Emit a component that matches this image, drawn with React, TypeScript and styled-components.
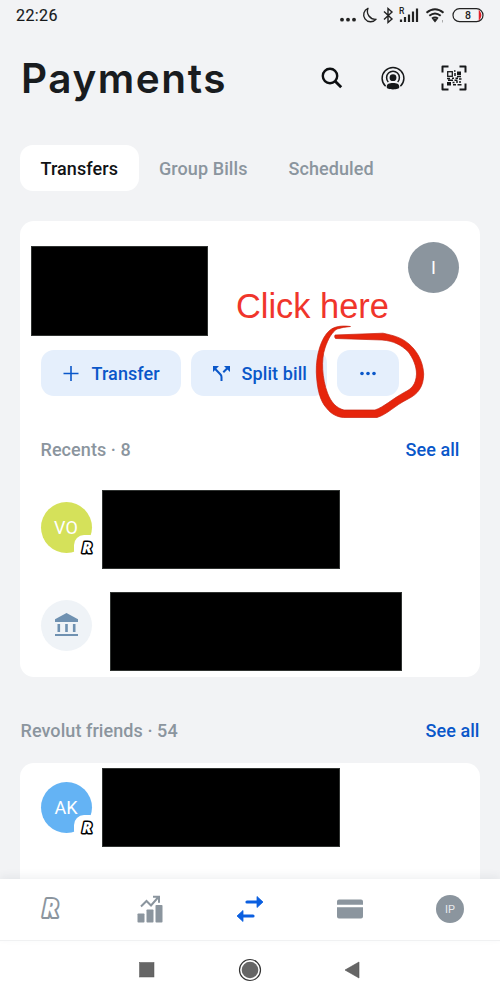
import React from "react";
import styled, { createGlobalStyle } from "styled-components";

const GlobalStyle = createGlobalStyle`
  * { box-sizing: border-box; }
  body { margin: 0; background: #f2f3f5; }
  svg { display: block; flex: none; }
`;

const Screen = styled.div`
  position: relative;
  display: flex;
  flex-direction: column;
  width: 500px;
  height: 1000px;
  overflow: hidden;
  background: #f2f3f5;
  font-family: Roboto, sans-serif;
  font-size: 18px;
  letter-spacing: 0.07px;
  color: #191c1f;
`;

const StatusBar = styled.div`
  display: flex;
  justify-content: space-between;
  align-items: center;
  height: 32px;
  padding: 0 14px 0 16px;
`;

const Clock = styled.span`
  font-size: 16px;
  line-height: 32px;
  letter-spacing: 0.4px;
  color: #16181a;
  -webkit-text-stroke: 0.15px #16181a;
`;

const Header = styled.header`
  display: flex;
  align-items: center;
  justify-content: space-between;
  height: 92px;
  padding: 0 32px 0 21px;
`;

const Title = styled.h1`
  margin: 1px 0 0;
  font-family: Inter, sans-serif;
  font-size: 40.5px;
  font-weight: 600;
  line-height: 48px;
  letter-spacing: 1.55px;
`;

const HeaderActions = styled.div`
  display: flex;
  align-items: center;
  gap: 33px;
`;

const Tabs = styled.nav`
  display: flex;
  height: 46px;
  margin: 21px 20px 0;
`;

const Tab = styled.button<{ $active?: boolean }>`
  height: 46px;
  padding: 1px 20.5px 0;
  margin-right: 0;
  border: 0;
  border-radius: 13px;
  background: ${({ $active }) => ($active ? "#fff" : "transparent")};
  color: ${({ $active }) => ($active ? "#111315" : "#8b959e")};
  font: 500 18px Roboto, sans-serif;
  letter-spacing: 0.08px;
`;

const Card = styled.section<{ $height?: number }>`
  flex: none;
  display: flex;
  flex-direction: column;
  width: 460px;
  height: ${({ $height }) => ($height ? `${$height}px` : "auto")};
  margin: 0 20px;
  border-radius: 14px;
  background: #fff;
`;

const AccountHeader = styled.div`
  display: flex;
  justify-content: space-between;
  align-items: flex-start;
  height: 129px;
  padding: 25px 21px 0 10.5px;
`;

const Redaction = styled.div<{ $width: number; $height: number }>`
  flex: none;
  width: ${({ $width }) => $width}px;
  height: ${({ $height }) => $height}px;
  background: #000;
  border: 1px solid #303331;
`;

const Avatar = styled.div<{ $color: string; $raise?: number }>`
  position: relative;
  flex: none;
  display: flex;
  align-items: center;
  justify-content: center;
  width: 51px;
  height: 51px;
  margin-top: ${({ $raise = 0 }) => -$raise}px;
  border-radius: 50%;
  background: ${({ $color }) => $color};
  color: #fff;
  font-size: 18px;
`;

const Badge = styled.span`
  position: absolute;
  left: 33px;
  top: 33px;
  width: 26px;
  height: 26px;
  border-radius: 10px;
  background: #fff;
`;

const Actions = styled.div`
  display: flex;
  gap: 10px;
  height: 46px;
  padding-left: 20.5px;
`;

const ActionButton = styled.button<{ $width: number }>`
  display: flex;
  align-items: center;
  justify-content: ${({ $width }) => ($width < 80 ? "center" : "flex-start")};
  gap: 10px;
  width: ${({ $width }) => $width}px;
  height: 46px;
  padding: 1px 0 0 ${({ $width }) => ($width < 80 ? 0 : 20)}px;
  border: 0;
  border-radius: 13px;
  background: #e5effc;
  color: #0a57c9;
  font: 500 18px/46px Roboto, sans-serif;
  letter-spacing: 0.1px;
  white-space: nowrap;
`;

const SectionHeading = styled.div<{ $inset: number }>`
  flex: none;
  display: flex;
  justify-content: space-between;
  height: 30px;
  padding: 0 ${({ $inset }) => $inset}px;
  line-height: 30px;
  font-weight: 500;
  color: #8b959e;
`;

const SeeAll = styled.a`
  color: #0a57c9;
`;

const ContactRow = styled.div<{ $gap: number; $height: number }>`
  display: flex;
  align-items: center;
  gap: ${({ $gap }) => $gap}px;
  height: ${({ $height }) => $height}px;
  padding-left: 20.5px;
`;

const Recents = styled.div`
  margin-top: 39px;
`;

const ContactList = styled.div`
  display: flex;
  flex-direction: column;
  gap: 23px;
  padding-top: 25px;
`;

const Content = styled.main`
  flex: none;
  display: flex;
  flex-direction: column;
  height: 658px;
  margin-top: 30px;
  overflow: hidden;
`;

const FriendsHeading = styled.div`
  flex: none;
  margin: 39px 0 17px;
`;

const FriendsBody = styled.div`
  padding-top: 5px;
`;

const BottomBar = styled.nav`
  position: relative;
  display: grid;
  grid-template-columns: repeat(5, 100px);
  place-items: center;
  height: 62px;
  padding-bottom: 1px;
  background: #fff;
  border-bottom: 1px solid #f0f1f2;
  box-shadow: 0 -3px 8px rgba(60, 70, 80, 0.07);
`;

const ProfileDot = styled.span`
  display: flex;
  align-items: center;
  justify-content: center;
  width: 28px;
  height: 28px;
  border-radius: 50%;
  background: #8b959e;
  color: #e6e9ec;
  font-size: 11px;
`;

const SystemBar = styled.div`
  display: flex;
  justify-content: center;
  align-items: center;
  gap: 83px;
  height: 59px;
  background: #fff;
  padding: 0 1px 2px 0;
`;

const Annotation = styled.div`
  position: absolute;
  left: 236px;
  top: 286px;
  font: 34.4px/40px "Liberation Sans", sans-serif;
  letter-spacing: 0;
  color: #f0352b;
  white-space: nowrap;
`;

const Scribble = styled.svg`
  position: absolute;
  left: 310px;
  top: 320px;
`;

function BrandMark() {
  return (
    <svg width="34" height="36" viewBox="0 0 34 36">
      <text
        x="17.6"
        y="26"
        textAnchor="middle"
        fontFamily="Open Sans, sans-serif"
        fontWeight="800"
        fontStyle="italic"
        fontSize="24"
        fill="#fff"
        stroke="#8b959e"
        strokeWidth="4"
        strokeLinejoin="round"
        paintOrder="stroke"
      >
        R
      </text>
    </svg>
  );
}

const BrandBadge = () => (
  <Badge>
    <svg width="26" height="26" viewBox="0 0 26 26">
      <text
        x="13"
        y="18.2"
        textAnchor="middle"
        fontFamily="Open Sans, sans-serif"
        fontWeight="800"
        fontStyle="italic"
        fontSize="15.5"
        fill="#fff"
        stroke="#000"
        strokeWidth="3"
        strokeLinejoin="round"
        paintOrder="stroke"
      >
        R
      </text>
    </svg>
  </Badge>
);

const StatusIcons = () => (
  <svg width="146" height="32" viewBox="340 0 146 32" fill="none" stroke="#222">
    <g fill="#222" stroke="none">
      <circle cx="342" cy="19.7" r="1.9" />
      <circle cx="348" cy="19.7" r="1.9" />
      <circle cx="354" cy="19.7" r="1.9" />
    </g>
    <path d="M368 8.300a7 7 0 1 0 8 11a8 8 0 0 1-8-11Z" strokeWidth="1.400" strokeLinejoin="round" />
    <path d="m384 11.500 8 7.500-4 3.500V8.500l4 3.500-8 7.500" strokeWidth="1.400" />
    <text x="399" y="14" fontFamily="Roboto, sans-serif" fontSize="8.500" fontWeight="500" fill="#222" stroke="none">R</text>
    <path d="M401 22v-2.500M405 22v-5M409 22v-7.500M413 22v-10.500M417 22V8.500" strokeWidth="2.200" />
    <path d="M426.500 12.800q8.500-7 17 0M429.300 15.800q5.700-4.600 11.400 0M432 18.600q3-2.200 6 0" strokeWidth="2" />
    <path d="m432.500 19.500 2.500 3 2.500-3q-2.500-1.500-5 0Z" fill="#222" stroke="none" />
    <path d="M442.500 20v2.500" stroke="#aaa" />
    <rect x="453" y="8.700" width="30" height="13" rx="6.500" strokeWidth="1.200" />
    <path d="M479.500 12q2.200 3.200 0 6.500Z" fill="#e0202a" stroke="#e0202a" strokeWidth="1.500" />
    <text x="465" y="19" fontFamily="Roboto, sans-serif" fontSize="10.500" fontWeight="500" fill="#222" stroke="none">8</text>
  </svg>
);

const SearchIcon = () => (
  <svg width="26" height="24" viewBox="0 0 26 24" fill="none" stroke="#0d0f11" strokeWidth="2.400">
    <circle cx="10" cy="10" r="7.200" />
    <path d="m15.200 15.200 6 6" strokeWidth="2.800" />
  </svg>
);

const NearbyIcon = () => (
  <svg width="28" height="28" viewBox="0 0 28 28" fill="none" stroke="#16181a">
    <path d="M6.600 22.300A10.900 10.900 0 1 1 21.400 22.300" strokeWidth="1.500" />
    <path d="M9.300 18A6.400 6.400 0 1 1 18.700 18" strokeWidth="1.500" />
    <circle cx="14" cy="13.700" r="3.400" fill="#16181a" stroke="none" />
    <path d="M7.700 23c0-3.300 2.500-4.100 6.300-4.100s6.300.8 6.300 4.100c0 1.800-2.500 2.400-6.300 2.400s-6.300-.6-6.300-2.400Z" fill="#16181a" stroke="none" />
  </svg>
);

const ScanIcon = () => (
  <svg width="28" height="28" viewBox="0 0 28 28" fill="none" stroke="#16181a">
    <path d="M2.500 8.500v-6h6M19.500 2.500h6v6M25.500 19.500v6h-6M8.500 25.500h-6v-6" strokeWidth="2" strokeLinejoin="round" />
    <rect x="7.700" y="7.700" width="4.600" height="4.600" strokeWidth="1.300" />
    <path d="M17 7.500h4v3.500h-4zM7 18h4v3.500h-4z" fill="#16181a" stroke="none" />
    <path d="M14 7h1.500M15 9v3M17 12.500h4M7 14.500h3M8 16.200h5M12 14.200h2M15.500 14.200h2.500M14.500 16.200h3M19 15h2.500M12.500 18.500h2M16 18h2M20 17v2M13 20.700h3M17.500 20.700h4" strokeWidth="1.500" />
  </svg>
);

const BankIcon = () => (
  <svg width="25" height="26" viewBox="0 0 25 26" fill="#6f91b1">
    <path d="M12.500 1 24 7.300V10H1V7.300Z" />
    <path d="M3.500 12h2.600v8H3.500zM11.200 12h2.600v8h-2.600zM18.900 12h2.600v8h-2.600zM1 22h23v2H1z" />
  </svg>
);

const PlusIcon = () => (
  <svg width="21" height="20" viewBox="0 0 21 20" stroke="#0a57c9" strokeWidth="1.600">
    <path d="M2.500 9.500h15M10 2v15" />
  </svg>
);

const SplitIcon = () => (
  <svg width="21" height="20" viewBox="0 0 21 20" fill="none" stroke="#0a57c9" strokeWidth="2">
    <path d="M10.500 17v-4q0-1.600-1.200-2.800L4 4.700M12.300 8.200l4-4" />
    <path d="M2 8V2h6ZM13 2h6v6Z" fill="#0a57c9" stroke="none" />
  </svg>
);

const MoreIcon = () => (
  <svg width="18" height="6" viewBox="0 0 18 6" fill="#0a57c9">
    <circle cx="3" cy="2.500" r="1.800" />
    <circle cx="9" cy="2.500" r="1.800" />
    <circle cx="15" cy="2.500" r="1.800" />
  </svg>
);

const StatsIcon = () => (
  <svg width="26" height="28" viewBox="0 0 26 28" fill="#8b959e">
    <rect x=".500" y="18.500" width="7" height="9" rx=".800" />
    <rect x="9.500" y="14.500" width="7" height="13" rx=".800" />
    <rect x="18.500" y="10" width="7" height="17.500" rx=".800" />
    <path d="m4 11.500 5.500-5.500 4.500 4.500 7-8M16 1.800h6v6" fill="none" stroke="#8b959e" strokeWidth="2" />
  </svg>
);

const ExchangeIcon = () => (
  <svg width="28" height="28" viewBox="0 0 28 28" stroke="#0b5fe0" fill="#0b5fe0">
    <path d="M11 7h12M17 21H5" strokeWidth="3.200" strokeLinecap="round" />
    <path d="m21 1.500 6 5.500-6 5.500ZM7 15.500 1 21l6 5.500Z" strokeWidth=".800" strokeLinejoin="round" />
  </svg>
);

const CardIcon = () => (
  <svg width="26" height="20" viewBox="0 0 26 20" fill="#8b959e">
    <path d="M2 .500h22q2 0 2 2v3.200H0V2.500q0-2 2-2ZM0 8.200h26v9.300q0 2-2 2H2q-2 0-2-2Z" />
  </svg>
);

export default function App() {
  return (
    <Screen>
      <GlobalStyle />
      <StatusBar>
        <Clock>22:26</Clock>
        <StatusIcons />
      </StatusBar>
      <Header>
        <Title>Payments</Title>
        <HeaderActions>
          <SearchIcon />
          <NearbyIcon />
          <ScanIcon />
        </HeaderActions>
      </Header>
      <Tabs>
        <Tab $active>Transfers</Tab>
        <Tab>Group Bills</Tab>
        <Tab>Scheduled</Tab>
      </Tabs>
      <Content>
        <Card $height={456}>
          <AccountHeader>
            <Redaction $width={177.5} $height={90} />
            <Avatar $color="#8b959e" $raise={4}>I</Avatar>
          </AccountHeader>
          <Actions>
            <ActionButton $width={140}>
              <PlusIcon />
              Transfer
            </ActionButton>
            <ActionButton $width={136}>
              <SplitIcon />
              Split bill
            </ActionButton>
            <ActionButton $width={62} aria-label="More">
              <MoreIcon />
            </ActionButton>
          </Actions>
          <Recents>
            <SectionHeading $inset={20.5}>
              <span>Recents · 8</span>
              <SeeAll>See all</SeeAll>
            </SectionHeading>
            <ContactList>
              <ContactRow $gap={10} $height={79}>
                <Avatar $color="#d5e15a" $raise={5}>
                  VO
                  <BrandBadge />
                </Avatar>
                <Redaction $width={238} $height={79} />
              </ContactRow>
              <ContactRow $gap={18} $height={79}>
                <Avatar $color="#eff3f7" $raise={13}>
                  <BankIcon />
                </Avatar>
                <Redaction $width={292} $height={79} />
              </ContactRow>
            </ContactList>
          </Recents>
        </Card>
        <FriendsHeading>
          <SectionHeading $inset={20.5}>
            <span>Revolut friends · 54</span>
            <SeeAll>See all</SeeAll>
          </SectionHeading>
        </FriendsHeading>
        <Card $height={180}>
          <FriendsBody>
            <ContactRow $gap={10} $height={79}>
              <Avatar $color="#64b3f4">
                AK
                <BrandBadge />
              </Avatar>
              <Redaction $width={238} $height={79} />
            </ContactRow>
          </FriendsBody>
        </Card>
      </Content>
      <BottomBar>
        <BrandMark />
        <StatsIcon />
        <ExchangeIcon />
        <CardIcon />
        <ProfileDot>IP</ProfileDot>
      </BottomBar>
      <SystemBar>
        <svg width="16" height="16" viewBox="0 0 16 16">
          <rect x=".500" y=".500" width="14.500" height="14.500" fill="#666" stroke="#555" strokeWidth=".500" />
        </svg>
        <svg width="24" height="24" viewBox="0 0 24 24">
          <circle cx="12" cy="12" r="10.500" fill="none" stroke="#333" strokeWidth="1.200" />
          <circle cx="12" cy="12" r="8.300" fill="#666" />
        </svg>
        <svg width="16" height="18" viewBox="0 0 16 18">
          <path d="M14 1v16L0 9Z" fill="#666" stroke="#555" strokeWidth=".600" />
        </svg>
      </SystemBar>
      <Annotation>Click here</Annotation>
      <Scribble width="120" height="104" viewBox="310 320 120 104">
        <path
          d="M350.500 326.500C342 325.500 335 326 329.500 330.500C321 338 316 355 316.300 372C317 389 320 401 326.500 408C331 414 337 417 343.500 417.500H377C388 414 394 406 408 399C418 394 423.500 387 423.700 374C423 360 416 350 409 344C401 337 393 335.500 383 333.200L335 335Q334 337 335.500 338.500L382 340C394 341 401 345 408 351.500C413 358 416.500 366 416.500 374C416 385 411 389 405 392C392 399 384 407 375 410H344C336 408 331 402 327.500 393C322 378 321 360 325 348C328 339 332 332 337 329Q343 327 350.500 326.500Z"
          fill="#e6250c"
          stroke="#c9200d"
          strokeWidth=".700"
        />
      </Scribble>
    </Screen>
  );
}
